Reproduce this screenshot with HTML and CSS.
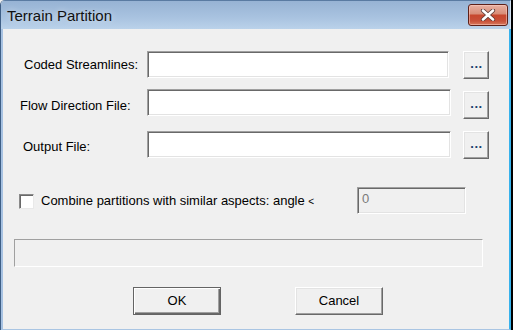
FILE: index.html
```html
<!DOCTYPE html>
<html>
<head>
<meta charset="utf-8">
<title>Terrain Partition</title>
<link rel="stylesheet" href="styles.css">
</head>
<body>
<div class="window">
  <div class="titlebar">
    <span class="title">Terrain Partition</span>
    <div class="close">
      <svg width="18" height="12" viewBox="0 0 18 12">
        <path d="M4 1.5 L14 10.5 M14 1.5 L4 10.5" stroke="#5c3a36" stroke-width="4.2" stroke-linecap="round" fill="none"/>
        <path d="M4 1.5 L14 10.5 M14 1.5 L4 10.5" stroke="#ffffff" stroke-width="2.6" stroke-linecap="round" fill="none"/>
      </svg>
    </div>
  </div>
  <div class="client">
    <div class="row row--first">
      <div class="label label--coded">Coded Streamlines:</div>
      <div class="field field--short"></div>
      <div class="browse">...</div>
    </div>
    <div class="row row--second">
      <div class="label label--flow">Flow Direction File:</div>
      <div class="field"></div>
      <div class="browse browse--low">...</div>
    </div>
    <div class="row row--third">
      <div class="label label--output">Output File:</div>
      <div class="field"></div>
      <div class="browse">...</div>
    </div>
    <div class="check-row">
      <div class="checkbox"></div>
      <div class="check-label">Combine partitions with similar aspects: angle <span class="lt">&lt;</span></div>
      <div class="angle">0</div>
    </div>
    <div class="status"></div>
    <div class="actions">
      <div class="btn btn--default">OK</div>
      <div class="btn btn--cancel">Cancel</div>
    </div>
  </div>
</div>
</body>
</html>
```

FILE: styles.css
```css
html, body {
  margin: 0;
  padding: 0;
  background: #f0f0f0;
}

.window {
  width: 513px;
  height: 330px;
  box-sizing: border-box;
  display: flex;
  flex-direction: column;
  border-left: 1px solid #3f5f86;
  border-right: 2px solid #000;
  border-top-left-radius: 5px;
  overflow: hidden;
  font-family: "Liberation Sans", Arial, sans-serif;
  font-size: 13px;
  color: #000;
}

.titlebar {
  height: 29px;
  flex: 0 0 29px;
  box-sizing: border-box;
  display: flex;
  align-items: flex-start;
  justify-content: space-between;
  background: linear-gradient(#97b3d4, #a9c3e0 60%, #bad2ea);
  border-top: 1px solid #5a7ba2;
  border-right: 1px solid #d5e4f3;
  padding-left: 6px;
}

.title {
  font-size: 15px;
  line-height: 17px;
  margin-top: 6px;
  color: #111;
  text-shadow: 0 0 6px rgba(255, 255, 255, 0.6);
}

.close {
  width: 40px;
  height: 22px;
  box-sizing: border-box;
  margin-top: 3px;
  margin-right: 2px;
  border: 1px solid #5e2018;
  border-radius: 3px;
  background: linear-gradient(#e8b0a2, #d88d78 45%, #c7472e 50%, #c8513a 80%, #d87a5e);
  box-shadow: inset 0 0 0 1px rgba(255, 210, 200, 0.5);
  display: flex;
  align-items: center;
  justify-content: center;
}

.client {
  flex: 1;
  box-sizing: border-box;
  background: #f0f0f0;
  border-left: 2px solid #a7c2e2;
  border-right: 2px solid #38b2ec;
  border-bottom: 1px solid #a9c5e3;
  padding-top: 22px;
  display: flex;
  flex-direction: column;
}

.row {
  display: flex;
  align-items: flex-start;
  height: 28px;
}

.row--second {
  margin-top: 10px;
}

.row--third {
  margin-top: 14px;
}

.label {
  width: 144px;
  box-sizing: border-box;
  padding-top: 7px;
  white-space: nowrap;
}

.label--coded {
  padding-left: 21px;
  padding-top: 6px;
}

.label--flow {
  padding-left: 17px;
  padding-top: 9px;
}

.label--output {
  padding-left: 20px;
  padding-top: 8px;
}

.field {
  width: 304px;
  height: 27px;
  box-sizing: border-box;
  background: #fff;
  border: 1px solid;
  border-color: #a0a0a0 #fff #fff #a0a0a0;
  box-shadow: inset 1px 1px 0 #696969, inset -1px -1px 0 #e3e3e3;
}

.field--short {
  width: 302px;
}

.browse {
  width: 26px;
  height: 28px;
  box-sizing: border-box;
  margin-left: 12px;
  background: #f0f0f0;
  border: 1px solid;
  border-color: #fff #696969 #696969 #fff;
  box-shadow: inset -1px -1px 0 #a0a0a0, inset 1px 1px 0 #e3e3e3;
  text-align: center;
  font-weight: bold;
  color: #1c3f6e;
  line-height: 24px;
  font-size: 13px;
  letter-spacing: 0.5px;
  padding-left: 1px;
}

.field--short + .browse {
  margin-left: 14px;
}

.browse--low {
  margin-top: 2px;
}

.check-row {
  display: flex;
  align-items: center;
  height: 27px;
  margin-top: 28px;
}

.checkbox {
  width: 15px;
  height: 15px;
  box-sizing: border-box;
  margin-left: 16px;
  margin-top: 1px;
  background: #fff;
  border: 1px solid;
  border-color: #8a8a8a #e9e9e9 #e9e9e9 #8a8a8a;
  box-shadow: inset 1px 1px 0 #696969;
}

.check-label {
  margin-left: 7px;
  white-space: nowrap;
}

.lt {
  font-size: 10px;
}

.angle {
  margin-left: auto;
  margin-right: 43px;
  width: 109px;
  height: 27px;
  box-sizing: border-box;
  background: #f0f0f0;
  border: 1px solid;
  border-color: #a0a0a0 #fff #fff #a0a0a0;
  box-shadow: inset 1px 1px 0 #696969, inset -1px -1px 0 #e3e3e3;
  color: #7a7a7a;
  padding: 3px 0 0 4px;
  line-height: 15px;
}

.status {
  margin-top: 25px;
  margin-left: 11px;
  width: 469px;
  height: 28px;
  box-sizing: border-box;
  border: 1px solid;
  border-color: #a0a0a0 #fff #fff #a0a0a0;
}

.actions {
  display: flex;
  margin-top: 20px;
  margin-left: 130px;
  gap: 74px;
}

.btn {
  width: 88px;
  height: 28px;
  box-sizing: border-box;
  background: #f0f0f0;
  border: 1px solid;
  border-color: #fff #696969 #696969 #fff;
  box-shadow: inset -1px -1px 0 #a0a0a0, inset 1px 1px 0 #e3e3e3;
  text-align: center;
  line-height: 25px;
}

.btn--default {
  border-color: #646464;
  box-shadow: inset 1px 1px 0 #fff, inset -1px -1px 0 #696969, inset -2px -2px 0 #a0a0a0;
}
```
